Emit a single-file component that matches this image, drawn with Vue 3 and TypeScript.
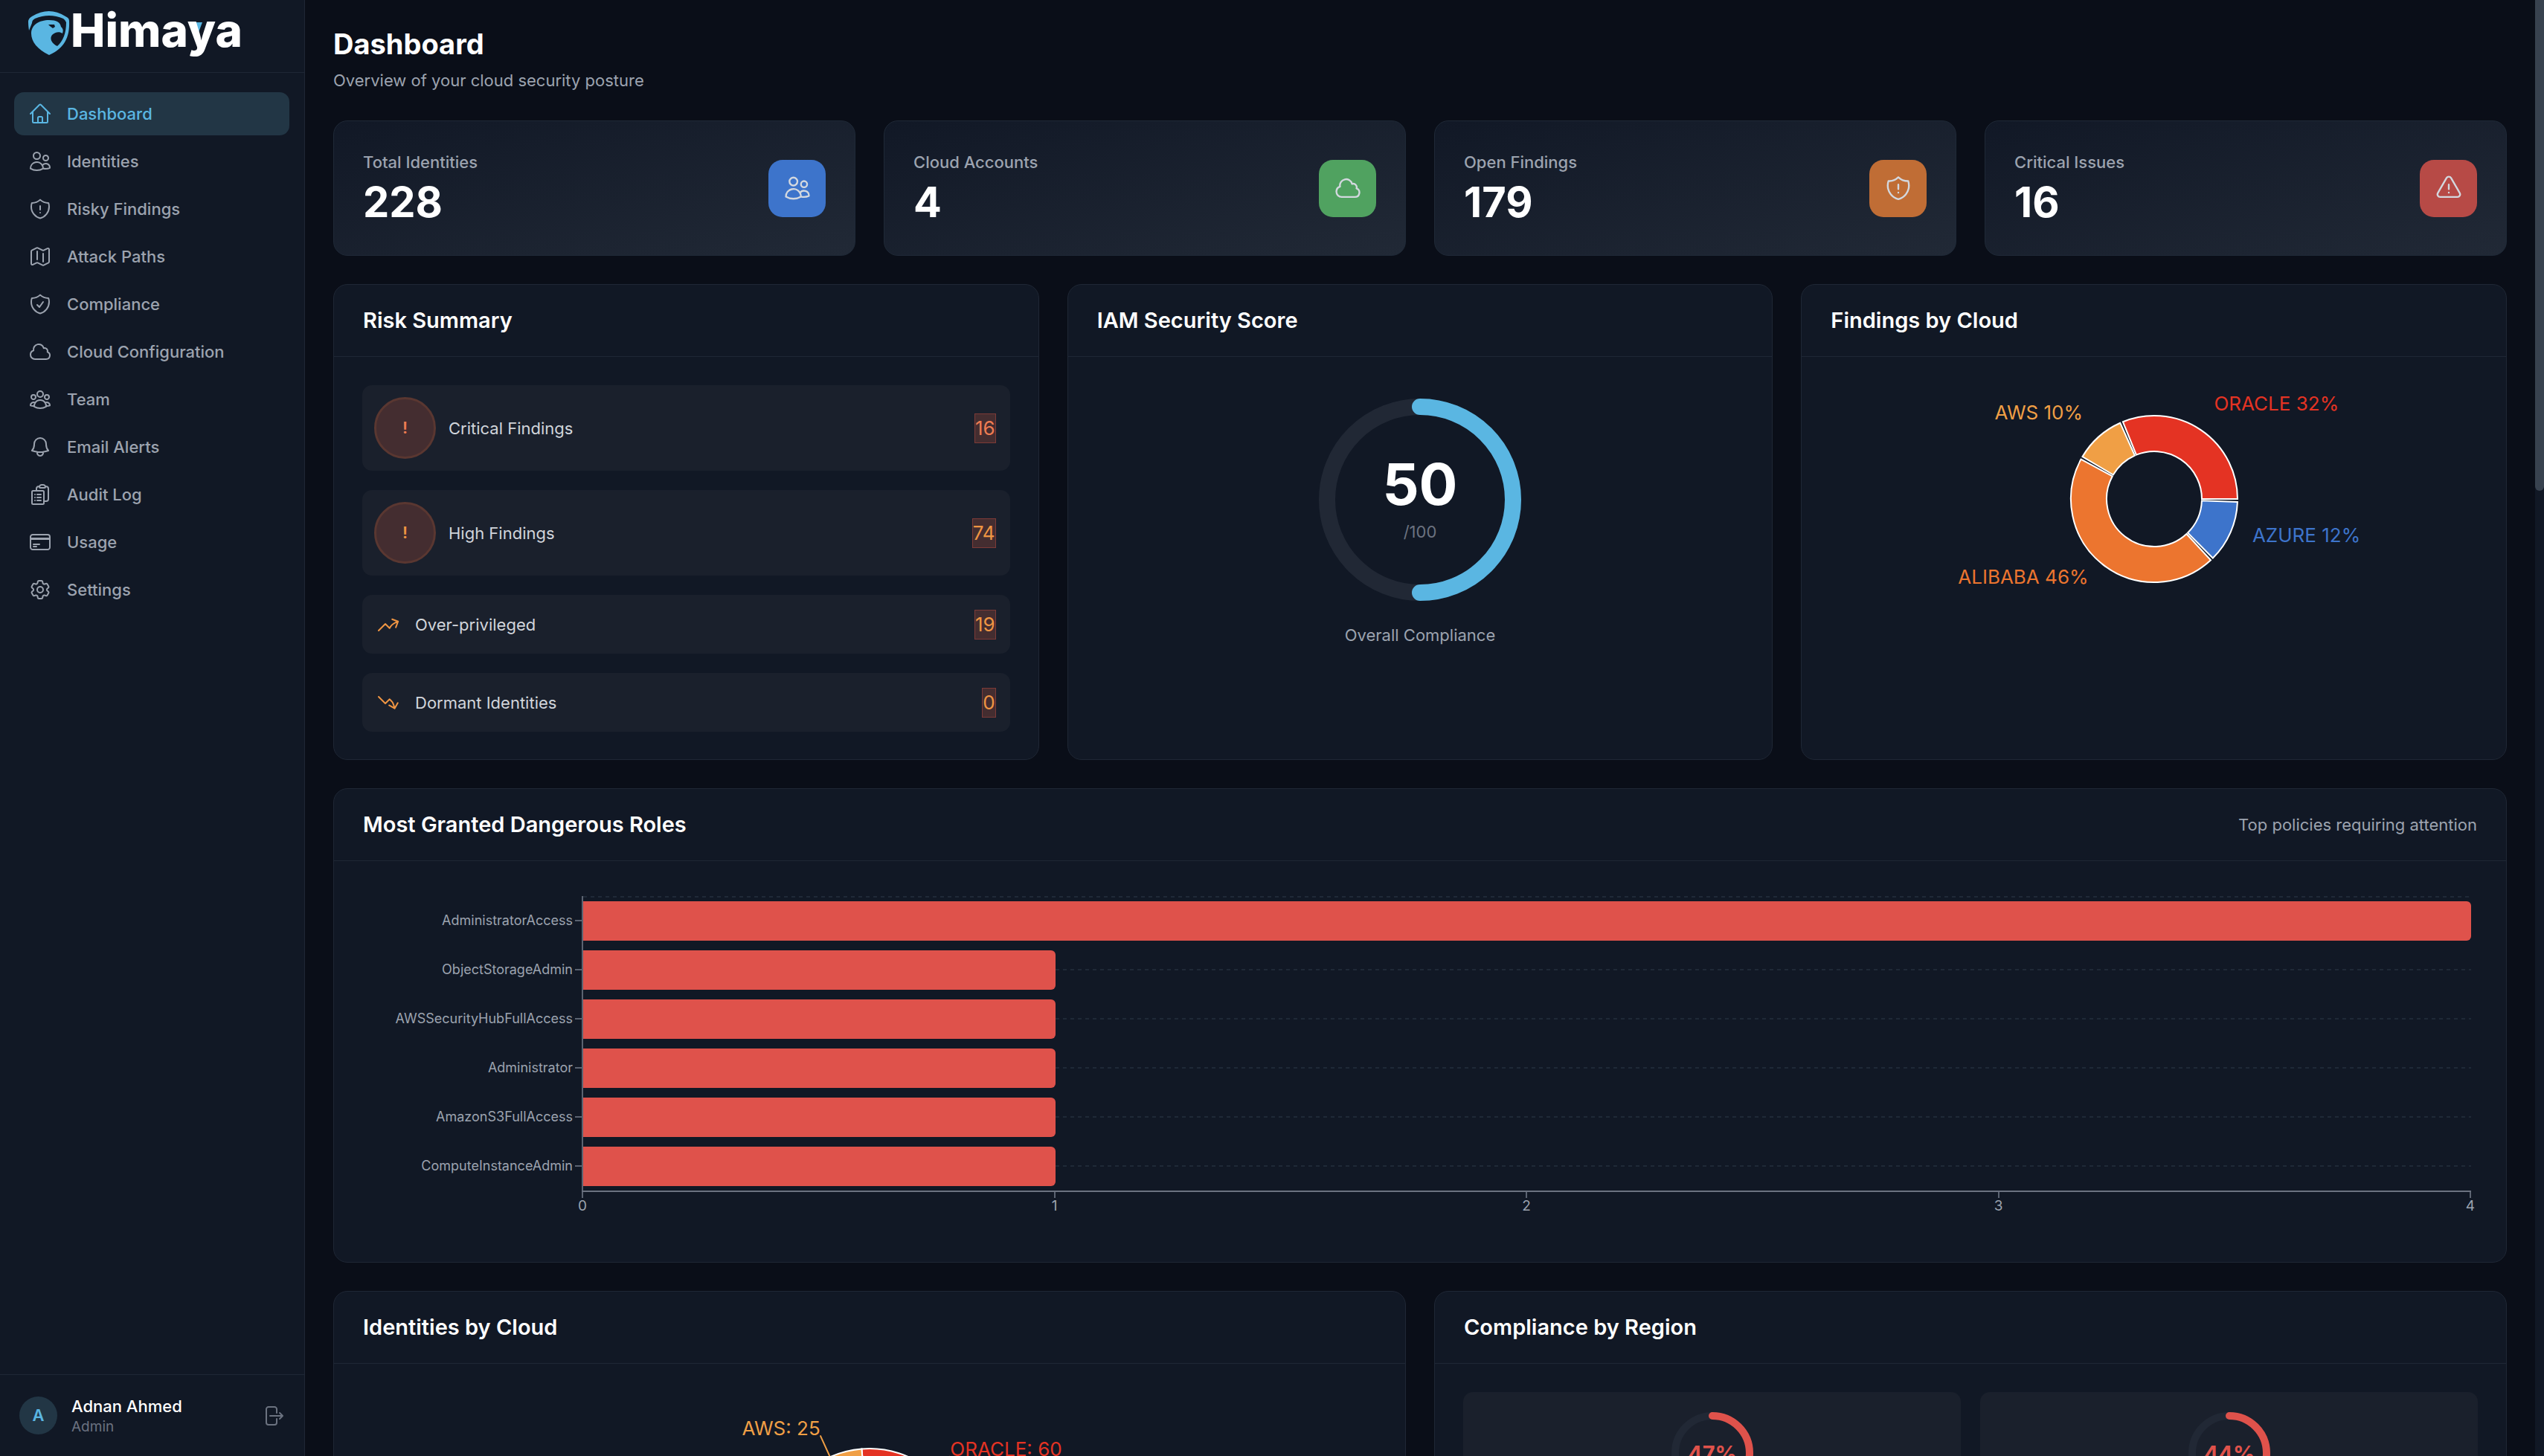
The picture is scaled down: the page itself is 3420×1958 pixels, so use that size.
<script setup lang="ts">
interface NavItem { label: string; icon: string; active?: boolean }
interface Stat { label: string; value: number; icon: string; tone: string }
interface Risk { label: string; value: number; icon?: string; critical?: boolean }
interface Share { name: string; value: number; color: string; label: string }
interface Slice { path: string; color: string; label: string; x: number; y: number; lx: number; ly: number; anchor: 'start' | 'end' }

const icons: Record<string, string> = {
  home: 'm2.25 12 8.954-8.955c.44-.439 1.152-.439 1.591 0L21.75 12M4.5 9.75v10.125c0 .621.504 1.125 1.125 1.125H9.75v-4.875c0-.621.504-1.125 1.125-1.125h2.25c.621 0 1.125.504 1.125 1.125V21h4.125c.621 0 1.125-.504 1.125-1.125V9.75M8.25 21h8.25',
  users: 'M15 19.128a9.38 9.38 0 0 0 2.625.372 9.337 9.337 0 0 0 4.121-.952 4.125 4.125 0 0 0-7.533-2.493M15 19.128v-.003c0-1.113-.285-2.16-.786-3.07M15 19.128v.106A12.318 12.318 0 0 1 8.624 21c-2.331 0-4.512-.645-6.374-1.766l-.001-.109a6.375 6.375 0 0 1 11.964-3.07M12 6.375a3.375 3.375 0 1 1-6.75 0 3.375 3.375 0 0 1 6.75 0Zm8.25 2.25a2.625 2.625 0 1 1-5.25 0 2.625 2.625 0 0 1 5.25 0Z',
  shieldAlert: 'M12 9v3.75m0-10.036A11.959 11.959 0 0 1 3.598 6 11.99 11.99 0 0 0 3 9.75c0 5.592 3.824 10.29 9 11.622 5.176-1.332 9-6.03 9-11.622 0-1.31-.21-2.571-.598-3.75h-.152c-3.196 0-6.1-1.25-8.25-3.286Zm0 13.036h.008v.008H12v-.008Z',
  map: 'M9 6.75V15m6-6v8.25m.503 3.498 4.875-2.437c.381-.19.622-.58.622-1.006V4.82c0-.836-.88-1.38-1.628-1.006l-3.869 1.934c-.317.159-.69.159-1.006 0L9.503 3.252a1.125 1.125 0 0 0-1.006 0L3.622 5.689C3.24 5.88 3 6.27 3 6.695V19.18c0 .836.88 1.38 1.628 1.006l3.869-1.934c.317-.159.69-.159 1.006 0l4.994 2.497c.317.158.69.158 1.006 0Z',
  shieldCheck: 'M9 12.75 11.25 15 15 9.75m-3-7.036A11.959 11.959 0 0 1 3.598 6 11.99 11.99 0 0 0 3 9.749c0 5.592 3.824 10.29 9 11.623 5.176-1.332 9-6.03 9-11.622 0-1.31-.21-2.571-.598-3.751h-.152c-3.196 0-6.1-1.248-8.25-3.285Z',
  cloud: 'M2.25 15a4.5 4.5 0 0 0 4.5 4.5H18a3.75 3.75 0 0 0 1.332-7.257 3 3 0 0 0-3.758-3.848 5.25 5.25 0 0 0-10.233 2.33A4.502 4.502 0 0 0 2.25 15Z',
  team: 'M18 18.72a9.094 9.094 0 0 0 3.741-.479 3 3 0 0 0-4.682-2.72m.94 3.198.001.031c0 .225-.012.447-.037.666A11.944 11.944 0 0 1 12 21c-2.17 0-4.207-.576-5.963-1.584A6.062 6.062 0 0 1 6 18.719m12 0a5.971 5.971 0 0 0-.941-3.197m0 0A5.995 5.995 0 0 0 12 12.75a5.995 5.995 0 0 0-5.058 2.772m0 0a3 3 0 0 0-4.681 2.72 8.986 8.986 0 0 0 3.74.477m.94-3.197a5.971 5.971 0 0 0-.94 3.197M15 6.75a3 3 0 1 1-6 0 3 3 0 0 1 6 0Zm6 3a2.25 2.25 0 1 1-4.5 0 2.25 2.25 0 0 1 4.5 0Zm-13.5 0a2.25 2.25 0 1 1-4.5 0 2.25 2.25 0 0 1 4.5 0Z',
  bell: 'M14.857 17.082a23.848 23.848 0 0 0 5.454-1.31A8.967 8.967 0 0 1 18 9.75V9A6 6 0 0 0 6 9v.75a8.967 8.967 0 0 1-2.312 6.022c1.733.64 3.56 1.085 5.455 1.31m5.714 0a24.255 24.255 0 0 1-5.714 0m5.714 0a3 3 0 1 1-5.714 0',
  clipboard: 'M9 12h3.75M9 15h3.75M9 18h3.75m3 .75H18a2.25 2.25 0 0 0 2.25-2.25V6.108c0-1.135-.845-2.098-1.976-2.192a48.424 48.424 0 0 0-1.123-.08m-5.801 0c-.065.21-.1.433-.1.664 0 .414.336.75.75.75h4.5a.75.75 0 0 0 .75-.75 2.25 2.25 0 0 0-.1-.664m-5.8 0A2.251 2.251 0 0 1 13.5 2.25H15c1.012 0 1.867.668 2.15 1.586m-5.8 0c-.376.023-.75.05-1.124.08C9.095 4.01 8.25 4.973 8.25 6.108V8.25m0 0H4.875c-.621 0-1.125.504-1.125 1.125v11.25c0 .621.504 1.125 1.125 1.125h9.75c.621 0 1.125-.504 1.125-1.125V9.375c0-.621-.504-1.125-1.125-1.125H8.25ZM6.75 12h.008v.008H6.75V12Zm0 3h.008v.008H6.75V15Zm0 3h.008v.008H6.75V18Z',
  card: 'M2.25 8.25h19.5M2.25 9h19.5m-16.5 5.25h6m-6 2.25h3m-3.75 3h15a2.25 2.25 0 0 0 2.25-2.25V6.75A2.25 2.25 0 0 0 19.5 4.5h-15a2.25 2.25 0 0 0-2.25 2.25v10.5A2.25 2.25 0 0 0 4.5 19.5Z',
  cog: 'M9.594 3.94c.09-.542.56-.94 1.11-.94h2.593c.55 0 1.02.398 1.11.94l.213 1.281c.063.374.313.686.645.87.074.04.147.083.22.127.325.196.72.257 1.075.124l1.217-.456a1.125 1.125 0 0 1 1.37.49l1.296 2.247a1.125 1.125 0 0 1-.26 1.431l-1.003.827c-.293.241-.438.613-.43.992a7.723 7.723 0 0 1 0 .255c-.008.378.137.75.43.991l1.004.827c.424.35.534.955.26 1.43l-1.298 2.247a1.125 1.125 0 0 1-1.369.491l-1.217-.456c-.355-.133-.75-.072-1.076.124a6.47 6.47 0 0 1-.22.128c-.331.183-.581.495-.644.869l-.213 1.281c-.09.543-.56.94-1.11.94h-2.594c-.55 0-1.019-.398-1.11-.94l-.213-1.281c-.062-.374-.312-.686-.644-.87a6.52 6.52 0 0 1-.22-.127c-.325-.196-.72-.257-1.076-.124l-1.217.456a1.125 1.125 0 0 1-1.369-.49l-1.297-2.247a1.125 1.125 0 0 1 .26-1.431l1.004-.827c.292-.24.437-.613.43-.991a6.932 6.932 0 0 1 0-.255c.007-.38-.138-.751-.43-.992l-1.004-.827a1.125 1.125 0 0 1-.26-1.43l1.297-2.247a1.125 1.125 0 0 1 1.37-.491l1.216.456c.356.133.751.072 1.076-.124.072-.044.146-.086.22-.128.332-.183.582-.495.644-.869l.214-1.28ZM15 12a3 3 0 1 1-6 0 3 3 0 0 1 6 0Z',
  logout: 'M15.75 9V5.25A2.25 2.25 0 0 0 13.5 3h-6a2.25 2.25 0 0 0-2.25 2.25v13.5A2.25 2.25 0 0 0 7.5 21h6a2.25 2.25 0 0 0 2.25-2.25V15m3 0 3-3m0 0-3-3m3 3H9',
  triangle: 'M12 9v3.75m-9.303 3.376c-.866 1.5.217 3.374 1.948 3.374h14.71c1.73 0 2.813-1.874 1.948-3.374L13.949 3.378c-.866-1.5-3.032-1.5-3.898 0L2.697 16.126ZM12 15.75h.007v.008H12v-.008Z',
  trendUp: 'M2.25 18 9 11.25l4.306 4.306a11.95 11.95 0 0 1 5.814-5.518l2.74-1.22m0 0-5.94-2.281m5.94 2.28-2.28 5.941',
  trendDown: 'M2.25 6 9 12.75l4.286-4.286a11.948 11.948 0 0 1 4.306 6.43l.776 2.898m0 0 3.182-5.511m-3.182 5.51-5.511-3.181',
}

const nav: NavItem[] = [
  { label: 'Dashboard', icon: 'home', active: true },
  { label: 'Identities', icon: 'users' },
  { label: 'Risky Findings', icon: 'shieldAlert' },
  { label: 'Attack Paths', icon: 'map' },
  { label: 'Compliance', icon: 'shieldCheck' },
  { label: 'Cloud Configuration', icon: 'cloud' },
  { label: 'Team', icon: 'team' },
  { label: 'Email Alerts', icon: 'bell' },
  { label: 'Audit Log', icon: 'clipboard' },
  { label: 'Usage', icon: 'card' },
  { label: 'Settings', icon: 'cog' },
]

const stats: Stat[] = [
  { label: 'Total Identities', value: 228, icon: 'users', tone: 'blue' },
  { label: 'Cloud Accounts', value: 4, icon: 'cloud', tone: 'green' },
  { label: 'Open Findings', value: 179, icon: 'shieldAlert', tone: 'orange' },
  { label: 'Critical Issues', value: 16, icon: 'triangle', tone: 'red' },
]

const risks: Risk[] = [
  { label: 'Critical Findings', value: 16, critical: true },
  { label: 'High Findings', value: 74 },
  { label: 'Over-privileged', value: 19, icon: 'trendUp' },
  { label: 'Dormant Identities', value: 0, icon: 'trendDown' },
]

const roles = [
  { name: 'AdministratorAccess', count: 4 },
  { name: 'ObjectStorageAdmin', count: 1 },
  { name: 'AWSSecurityHubFullAccess', count: 1 },
  { name: 'Administrator', count: 1 },
  { name: 'AmazonS3FullAccess', count: 1 },
  { name: 'ComputeInstanceAdmin', count: 1 },
]
const ticks = [0, 1, 2, 3, 4]

const regions = [47, 44]
const ringLength = 2 * Math.PI * 50

// Slices run counter-clockwise from three o'clock.
function buildSlices(shares: Share[], total: number, inner: number, outer: number, gap: number): Slice[] {
  const point = (r: number, deg: number) => {
    const a = (deg * Math.PI) / 180
    return [r * Math.cos(a), -r * Math.sin(a)]
  }
  let start = 0
  const sweepTotal = 360 - gap * shares.length
  return shares.map((s) => {
    const end = start + (s.value / total) * sweepTotal
    const large = end - start > 180 ? 1 : 0
    const [ax, ay] = point(outer, start)
    const [bx, by] = point(outer, end)
    const [cx, cy] = point(inner, end)
    const [dx, dy] = point(inner, start)
    const hole = inner > 0 ? `L${cx} ${cy}A${inner} ${inner} 0 ${large} 1 ${dx} ${dy}` : 'L0 0'
    const mid = (start + end) / 2
    const [x, y] = point(outer, mid)
    const [lx, ly] = point(outer + 32, mid)
    start = end + gap
    return {
      path: `M${ax} ${ay}A${outer} ${outer} 0 ${large} 0 ${bx} ${by}${hole}Z`,
      color: s.color,
      label: s.label,
      x, y, lx, ly,
      anchor: lx > 0 ? 'start' : 'end',
    }
  })
}

const findingSlices = buildSlices([
  { name: 'oracle', value: 57, color: '#e43323', label: 'ORACLE 32%' },
  { name: 'aws', value: 18, color: '#f09f45', label: 'AWS 10%' },
  { name: 'alibaba', value: 82, color: '#ec752f', label: 'ALIBABA 46%' },
  { name: 'azure', value: 22, color: '#3d74cb', label: 'AZURE 12%' },
], 179, 64, 112, 2)

const identitySlices = buildSlices([
  { name: 'oracle', value: 60, color: '#e43323', label: 'ORACLE: 60' },
  { name: 'aws', value: 25, color: '#f09f45', label: 'AWS: 25' },
], 228, 0, 128, 0)
</script>

<template>
  <div class="app">
    <aside class="sidebar">
      <div class="brand">
        <svg class="logo" width="290" height="70" viewBox="0 0 290 70" role="img" aria-label="Himaya">
          <path d="M1 26C0 20 0 16 0 13Q1 9 5 7Q28-7 50 7Q55 9 55 13C56 36 48 50 28 59C12 51 4 41 4 30C4 18 15 12 28 12C38 12 43 15 44 21Q48 24 46 30C42 27 36 28 32 32C28 37 32 44 39 47C47 40 51 29 51 15Q50 12 47 10Q28 2 9 10Q5 12 5 16Z" fill="#5ab6e2" />
          <path d="M27 18H35L36 21L33 23L29 20Z" fill="#111825" />
          <path d="M222 15h12l-6 16Z" fill="#5ab6e2" />
          <text class="wordmark" x="57" y="48">Himaya</text>
        </svg>
      </div>
      <nav class="nav">
        <a v-for="item in nav" :key="item.label" href="#" class="nav-item" :class="{ active: item.active }">
          <svg class="icon" viewBox="0 0 24 24"><path :d="icons[item.icon]" /></svg>
          <span>{{ item.label }}</span>
        </a>
      </nav>
      <div class="account">
        <div class="avatar">A</div>
        <div class="who">
          <div class="who-name">Adnan Ahmed</div>
          <div class="who-role">Admin</div>
        </div>
        <button class="logout" type="button" aria-label="Log out">
          <svg class="icon" viewBox="0 0 24 24"><path :d="icons.logout" /></svg>
        </button>
      </div>
    </aside>

    <main class="main">
      <header class="page-head">
        <h1>Dashboard</h1>
        <p>Overview of your cloud security posture</p>
      </header>

      <section class="grid four">
        <article v-for="s in stats" :key="s.label" class="stat">
          <div>
            <div class="stat-label">{{ s.label }}</div>
            <div class="stat-value">{{ s.value }}</div>
          </div>
          <div class="stat-icon" :class="s.tone">
            <svg class="icon" viewBox="0 0 24 24"><path :d="icons[s.icon]" /></svg>
          </div>
        </article>
      </section>

      <section class="grid three">
        <article class="panel">
          <header class="panel-head"><h2>Risk Summary</h2></header>
          <div class="panel-body risks">
            <div v-for="r in risks" :key="r.label" class="risk" :class="{ round: !r.icon, critical: r.critical }">
              <svg v-if="r.icon" class="icon" viewBox="0 0 24 24"><path :d="icons[r.icon]" /></svg>
              <span v-else class="bang">!</span>
              <span class="risk-label">{{ r.label }}</span>
              <span class="risk-count">{{ r.value }}</span>
            </div>
          </div>
        </article>

        <article class="panel">
          <header class="panel-head"><h2>IAM Security Score</h2></header>
          <div class="panel-body score">
            <div class="gauge">
              <svg viewBox="0 0 272 272">
                <circle cx="136" cy="136" r="125" fill="none" stroke="#212835" stroke-width="22" />
                <path d="M136 11A125 125 0 0 1 136 261" fill="none" stroke="#5ab6e2" stroke-width="22" stroke-linecap="round" />
              </svg>
              <div class="gauge-text">
                <div class="gauge-value">50</div>
                <div class="gauge-max">/100</div>
              </div>
            </div>
            <div class="gauge-label">Overall Compliance</div>
          </div>
        </article>

        <article class="panel">
          <header class="panel-head"><h2>Findings by Cloud</h2></header>
          <div class="panel-body centered">
            <svg class="donut" viewBox="-320 -153 640 306">
              <g v-for="s in findingSlices" :key="s.label">
                <path :d="s.path" :fill="s.color" stroke="#fff" stroke-width="2" />
                <text :x="s.lx" :y="s.ly" :text-anchor="s.anchor" :fill="s.color">{{ s.label }}</text>
              </g>
            </svg>
          </div>
        </article>
      </section>

      <section class="panel">
        <header class="panel-head">
          <h2>Most Granted Dangerous Roles</h2>
          <span class="panel-note">Top policies requiring attention</span>
        </header>
        <div class="panel-body">
          <div class="chart">
            <div class="bars">
              <div v-for="r in roles" :key="r.name" class="bar-row">
                <span class="bar-label">{{ r.name }}</span>
                <span class="bar-tick"></span>
                <div class="bar-track">
                  <div class="bar" :style="{ width: (r.count / 4) * 100 + '%' }"></div>
                  <div class="bar-guide"></div>
                </div>
              </div>
            </div>
            <div class="x-axis">
              <div v-for="t in ticks" :key="t" class="x-tick"><span>{{ t }}</span></div>
            </div>
          </div>
        </div>
      </section>

      <section class="grid two">
        <article class="panel">
          <header class="panel-head"><h2>Identities by Cloud</h2></header>
          <div class="panel-body centered">
            <svg class="pie" viewBox="-320 -204 640 408">
              <g v-for="s in identitySlices" :key="s.label">
                <path :d="s.path" :fill="s.color" stroke="#fff" stroke-width="2" />
                <line :x1="s.x" :y1="s.y" :x2="s.lx" :y2="s.ly" :stroke="s.color" stroke-width="2" />
                <text :x="s.lx" :y="s.ly" :text-anchor="s.anchor" :fill="s.color">{{ s.label }}</text>
              </g>
            </svg>
          </div>
        </article>
        <article class="panel">
          <header class="panel-head"><h2>Compliance by Region</h2></header>
          <div class="panel-body regions">
            <div v-for="p in regions" :key="p" class="region">
              <svg class="ring" viewBox="0 0 112 112">
                <circle cx="56" cy="56" r="50" fill="none" stroke="#212835" stroke-width="10" />
                <circle cx="56" cy="56" r="50" fill="none" stroke="#df524b" stroke-width="10" stroke-linecap="round"
                  :stroke-dasharray="(ringLength * p) / 100 + ' ' + ringLength" transform="rotate(-90 56 56)" />
                <text x="56" y="67" text-anchor="middle">{{ p }}%</text>
              </svg>
            </div>
          </div>
        </article>
      </section>
    </main>

    <div class="scroll-track"><div class="scroll-thumb"></div></div>
  </div>
</template>

<style>
body {
  margin: 0;
  background: #0a0e18;
}
</style>

<style scoped>
* {
  box-sizing: border-box;
}
.app {
  display: flex;
  height: 100vh;
  overflow: hidden;
  background: #0a0e18;
  color: #fff;
  font-family: Inter, "Liberation Sans", sans-serif;
  font-size: 22px;
  line-height: 34px;
}
h1, h2, p {
  margin: 0;
}
.icon {
  width: 32px;
  height: 32px;
  flex: none;
  fill: none;
  stroke: currentColor;
  stroke-width: 1.5;
  stroke-linecap: round;
  stroke-linejoin: round;
}

.sidebar {
  flex: none;
  display: flex;
  flex-direction: column;
  width: 410px;
  background: #111825;
  border-right: 1px solid #1f2735;
}
.brand {
  height: 98px;
  padding: 15px 38px 0;
  border-bottom: 1px solid #1f2735;
}
.logo {
  display: block;
  overflow: visible;
}
.wordmark {
  font-size: 62px;
  font-weight: 800;
  fill: #fff;
}
.nav {
  flex: 1;
  display: flex;
  flex-direction: column;
  gap: 6px;
  padding: 26px 20px 26px 19px;
}
.nav-item {
  display: flex;
  align-items: center;
  gap: 20px;
  height: 58px;
  padding: 0 19px;
  border-radius: 13px;
  color: #9ca3af;
  font-weight: 500;
  text-decoration: none;
}
.nav-item.active {
  background: #223645;
  color: #5ab6e2;
}
.account {
  display: flex;
  align-items: center;
  gap: 19px;
  height: 110px;
  padding: 0 26px;
  border-top: 1px solid #1f2735;
}
.avatar {
  width: 51px;
  height: 51px;
  border-radius: 50%;
  background: #223645;
  color: #5ab6e2;
  font-weight: 600;
  line-height: 51px;
  text-align: center;
}
.who {
  flex: 1;
}
.who-name {
  font-weight: 500;
  line-height: 30px;
}
.who-role {
  color: #6b7280;
  font-size: 19px;
  line-height: 26px;
}
.logout {
  display: flex;
  padding: 0;
  border: 0;
  background: none;
  color: #6b7280;
}

.main {
  flex: 1;
  min-width: 0;
  display: flex;
  flex-direction: column;
  gap: 38px;
  padding: 38px;
  overflow: hidden;
}
.main > * {
  flex: none;
}
.page-head {
  display: flex;
  flex-direction: column;
  gap: 12px;
}
h1 {
  font-size: 38px;
  font-weight: 700;
  line-height: 42px;
}
.page-head p {
  color: #9ca3af;
  line-height: 32px;
}
.grid {
  display: grid;
  gap: 38px;
}
.four {
  grid-template-columns: repeat(4, 1fr);
}
.three {
  grid-template-columns: repeat(3, 1fr);
}
.two {
  grid-template-columns: repeat(2, 1fr);
}

.stat {
  display: flex;
  align-items: center;
  justify-content: space-between;
  padding: 38px 39px;
  border: 1px solid #1f2937;
  border-radius: 19px;
  background: linear-gradient(to bottom right, #111826, #212936);
}
.stat-label {
  color: #9ca3af;
  font-weight: 500;
}
.stat-value {
  margin-top: 4px;
  font-size: 56px;
  font-weight: 700;
  line-height: 66px;
}
.stat-icon {
  display: flex;
  align-items: center;
  justify-content: center;
  width: 77px;
  height: 77px;
  border-radius: 19px;
  color: #d3d8df;
}
.stat-icon .icon {
  width: 38px;
  height: 38px;
}
.blue { background: #3d74cb; }
.green { background: #50a260; }
.orange { background: #c06d35; }
.red { background: #b74a46; }

.panel {
  border: 1px solid #1f2735;
  border-radius: 19px;
  background: #111825;
}
.panel-head {
  display: flex;
  align-items: center;
  justify-content: space-between;
  height: 97px;
  padding: 0 39px;
  border-bottom: 1px solid #1f2735;
}
h2 {
  font-size: 29px;
  font-weight: 600;
  line-height: 44px;
}
.panel-note {
  color: #9ca3af;
}
.panel-body {
  padding: 38px 38px 37px;
}

.risks {
  display: flex;
  flex-direction: column;
  gap: 26px;
}
.risk {
  display: flex;
  align-items: center;
  gap: 20px;
  height: 79px;
  padding: 0 19px;
  border-radius: 13px;
  background: #1a202c;
  color: #ef9543;
}
.risk.round {
  gap: 17px;
  height: 115px;
  padding-left: 16px;
}
.risk.critical {
  color: #ee7c52;
}
.bang {
  width: 83px;
  height: 83px;
  border: 3px solid #5a3731;
  border-radius: 50%;
  background: #442d30;
  font-weight: 600;
  line-height: 77px;
  text-align: center;
}
.risk-label {
  flex: 1;
  color: #d1d5db;
}
.risk-count {
  border: 1px solid #7d3a37;
  background: #442d30;
  font-size: 26px;
  line-height: 38px;
}

.score {
  display: flex;
  flex-direction: column;
  align-items: center;
  gap: 29px;
  padding-top: 56px;
}
.gauge {
  display: grid;
  width: 272px;
  height: 272px;
}
.gauge > * {
  grid-area: 1 / 1;
}
.gauge-text {
  display: flex;
  flex-direction: column;
  align-items: center;
  justify-content: center;
  gap: 8px;
}
.gauge-value {
  font-size: 77px;
  font-weight: 700;
  line-height: 77px;
}
.gauge-max {
  color: #6b7280;
}
.gauge-label {
  color: #9ca3af;
}

.centered {
  display: flex;
  justify-content: center;
}
.donut,
.pie {
  width: 640px;
  height: 306px;
  overflow: visible;
  font-size: 26px;
}
.pie {
  height: 408px;
}

.chart {
  height: 464px;
  padding: 9px 9px 0 0;
}
.bar-row {
  display: flex;
  align-items: center;
  height: 66px;
}
.bar-label {
  width: 286px;
  padding-right: 3px;
  color: #9ca3af;
  font-size: 18px;
  text-align: right;
}
.bar-tick {
  width: 10px;
  height: 2px;
  background: #5b6371;
}
.bar-track {
  flex: 1;
  display: flex;
  align-items: center;
  height: 66px;
  margin-left: -1px;
  border-left: 2px solid #5b6371;
}
.bar-row:first-child .bar-track {
  background: repeating-linear-gradient(90deg, #1f2937 0 5px, transparent 5px 10px) top / 100% 2px no-repeat;
}
.bar {
  height: 53px;
  border-radius: 0 6px 6px 0;
  background: #df524b;
}
.bar-guide {
  flex: 1;
  height: 2px;
  background: repeating-linear-gradient(90deg, #1f2937 0 5px, transparent 5px 10px);
}
.x-axis {
  display: flex;
  justify-content: space-between;
  margin-left: 295px;
  border-top: 2px solid #6b7280;
}
.x-tick {
  display: flex;
  flex-direction: column;
  align-items: center;
  width: 2px;
  color: #9ca3af;
  font-size: 19px;
  line-height: 22px;
}
.x-tick::before {
  content: "";
  width: 2px;
  height: 8px;
  background: #5b6371;
}

.regions {
  display: grid;
  grid-template-columns: repeat(2, 1fr);
  gap: 26px;
}
.region {
  display: flex;
  justify-content: center;
  padding: 26px;
  border-radius: 13px;
  background: #1a202c;
}
.ring {
  width: 112px;
  height: 112px;
  font-size: 29px;
  font-weight: 700;
  fill: #df524b;
}

.scroll-track {
  flex: none;
  width: 12px;
  background: #111825;
}
.scroll-thumb {
  height: 33.7%;
  border-radius: 0 0 6px 6px;
  background: #38424f;
}
</style>
